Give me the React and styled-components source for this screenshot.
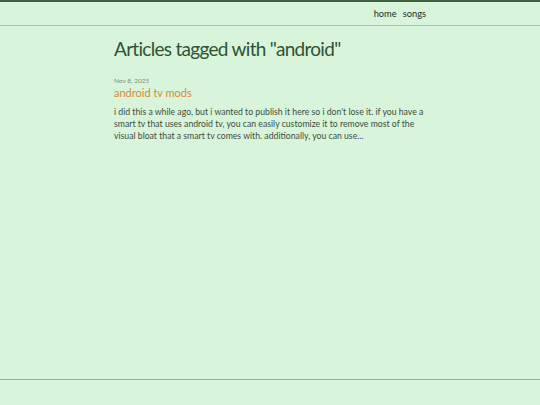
import styled, { createGlobalStyle } from "styled-components";

const GlobalStyle = createGlobalStyle`
  html, body {
    margin: 0;
    padding: 0;
    background: #d8f5db;
  }
  body {
    font-family: "Lato", "Noto Sans", sans-serif;
  }
`;

const Page = styled.div`
  min-height: 405px;
  display: flex;
  flex-direction: column;
  border-top: 2px solid #3f5f41;
  box-sizing: border-box;
`;

const Header = styled.header`
  height: 23px;
  border-bottom: 1px solid #a6c9a8;
  display: flex;
  justify-content: center;
`;

const HeaderInner = styled.div`
  width: 312px;
  display: flex;
  justify-content: flex-end;
  align-items: center;
  gap: 6px;
`;

const NavLink = styled.a`
  font-size: 9.3px;
  color: #1f2a1f;
  text-decoration: none;
  cursor: pointer;
`;

const Main = styled.main`
  flex: 1;
  display: flex;
  justify-content: center;
`;

const Content = styled.div`
  width: 312px;
  padding-top: 10px;
`;

const Title = styled.h1`
  margin: 0 0 15px;
  font-size: 19px;
  letter-spacing: -0.7px;
  font-weight: 400;
  color: #2f5234;
  line-height: 26px;
`;

const Article = styled.article`
  display: flex;
  flex-direction: column;
`;

const Date = styled.div`
  font-size: 6.5px;
  color: #7d8c7d;
  line-height: 8px;
  margin-bottom: 1px;
`;

const ArticleTitle = styled.a`
  font-size: 11px;
  color: #d98a34;
  line-height: 14px;
  text-decoration: none;
  margin-bottom: 6px;
`;

const Excerpt = styled.p`
  margin: 0;
  font-size: 8.7px;
  line-height: 12px;
  color: #3c4d3c;
`;

const Footer = styled.footer`
  height: 25px;
  border-top: 1px solid #93b595;
`;

export default function App() {
  return (
    <>
      <GlobalStyle />
      <Page>
        <Header>
          <HeaderInner>
            <NavLink>home</NavLink>
            <NavLink>songs</NavLink>
          </HeaderInner>
        </Header>
        <Main>
          <Content>
            <Title>Articles tagged with "android"</Title>
            <Article>
              <Date>Nov 8, 2025</Date>
              <ArticleTitle>android tv mods</ArticleTitle>
              <Excerpt>
                i did this a while ago, but i wanted to publish it here so i don't lose it. if you have a
                smart tv that uses android tv, you can easily customize it to remove most of the
                visual bloat that a smart tv comes with. additionally, you can use...
              </Excerpt>
            </Article>
          </Content>
        </Main>
        <Footer />
      </Page>
    </>
  );
}
